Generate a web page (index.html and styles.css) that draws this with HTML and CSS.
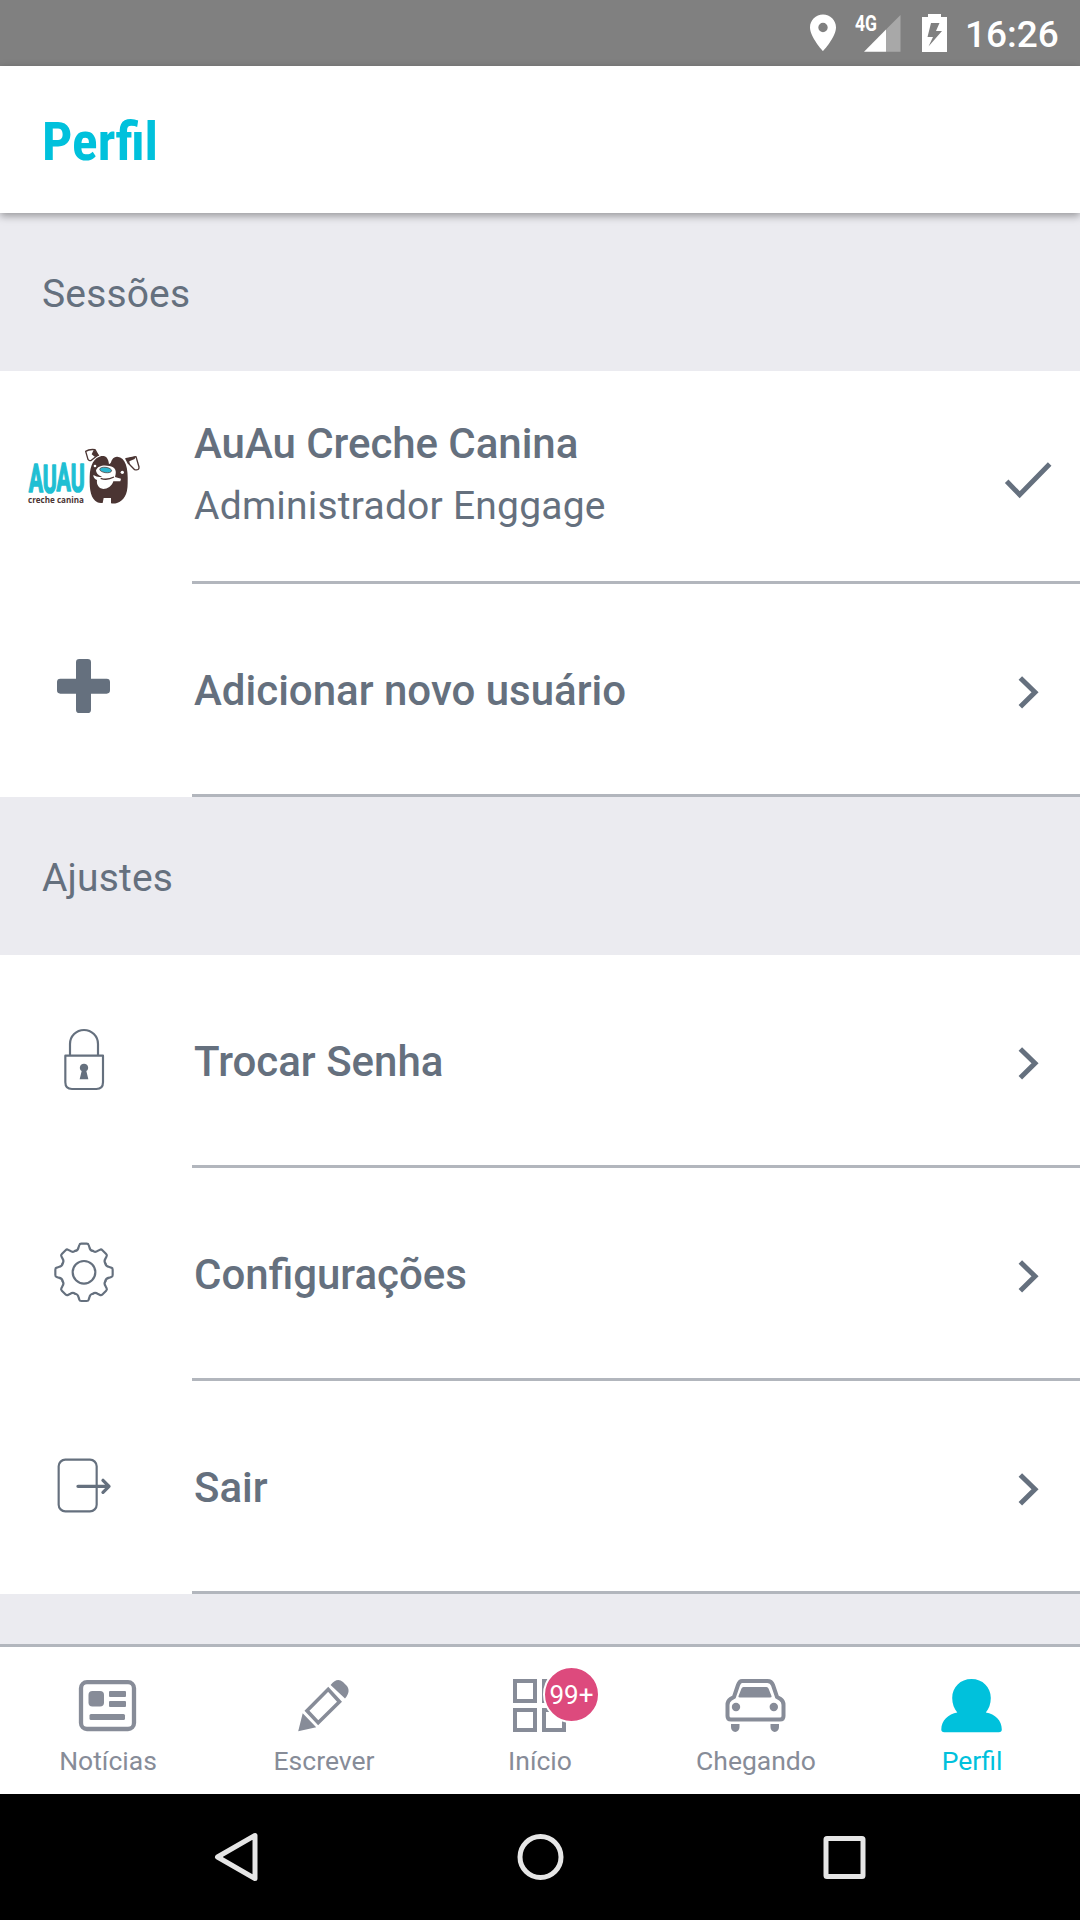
FILE: index.html
```
<!DOCTYPE html>
<html lang="pt-BR">
<head>
<meta charset="utf-8">
<title>Perfil</title>
<link rel="stylesheet" href="styles.css">
</head>
<body>
<div class="status">
  <svg width="117" height="66" viewBox="800 0 117 66">
    <path fill="#fff" fill-rule="evenodd" d="M823 14.500c-7.200 0-13 5.800-13 13 0 9.600 13 23.700 13 23.700s13-14.100 13-23.700c0-7.200-5.800-13-13-13zm0 8.300a4.700 4.700 0 1 1 0 9.400 4.700 4.700 0 0 1 0-9.400z"/>
    <text class="net" x="855" y="31" textLength="22" lengthAdjust="spacingAndGlyphs">4G</text>
    <path fill="#a8a8a8" d="M886 29.500L900.500 15v36.700H886z"/>
    <path fill="#fff" d="M864 51.700L886 29.500v22.200z"/>
  </svg>
  <svg width="40" height="66" viewBox="917 0 40 66">
    <path fill="#fff" fill-rule="evenodd" d="M928 14h13v3h6v35h-25V17h6zM931 23l-3.500 14h5.500l-4.500 9.500L942 31h-6l3.500-8z"/>
  </svg>
  <span class="clock">16:26</span>
</div>
<header class="header"><h1 class="title">Perfil</h1></header>
<main class="main">
  <h2 class="section">Sessões</h2>
  <div class="row">
    <svg class="logo" width="180" height="110" viewBox="0 3 540 330">
      <text class="logo-name" x="56" y="217" dy="0 3 -6 1" textLength="168" lengthAdjust="spacingAndGlyphs">AUAU</text>
      <text class="logo-sub" x="54" y="248" textLength="168" lengthAdjust="spacingAndGlyphs">creche canina</text>
      <path fill="#4b3533" d="M297 133C295 113 287 106 274 108C252 113 240 135 239 170C238 214 243 235 262 247Q267 250 278 249L281 234H303V250Q312 252 321 249C341 242 353 225 353 190C355 142 347 113 322 110Q308 109 302 129z"/>
      <path fill="#fff" d="M258 151C263 137 281 134 298 138C316 141 321 152 315 171L333 176 331 184 310 184C306 199 292 207 280 207C265 205 259 193 261 180Q250 176 250 165Q264 174 276 170Q258 164 258 151z"/>
      <path fill="none" stroke="#4b3533" stroke-width="4" d="M272 175Q291 182 312 171"/>
      <ellipse cx="287" cy="150" rx="18" ry="8" fill="#2bb6cf" stroke="#4b3533" stroke-width="2" transform="rotate(8 287 150)"/>
      <circle cx="255" cy="138" r="4" fill="#fff"/><circle cx="337" cy="157" r="5" fill="#fff"/>
      <path fill="#fff" stroke="#4b3533" stroke-width="4" stroke-linejoin="round" d="M227 94Q237 87 255 89L264 105 245 120Q239 125 234 118z"/>
      <path fill="#4b3533" d="M252 88L268 107 254 110 245 103z"/>
      <path fill="#fff" stroke="#4b3533" stroke-width="4" stroke-linejoin="round" d="M348 116L378 110 387 141Q388 152 374 149L355 130z"/>
      <path fill="#4b3533" d="M346 116L377 109 374 117 358 124 360 134z"/>
    </svg>
    <div class="body">
      <div class="texts"><div class="name">AuAu Creche Canina</div><div class="sub">Administrador Enggage</div></div>
      <svg width="120" height="100" viewBox="0 -12 360 300"><path class="mark" d="M140 154L179 194 269 102"/></svg>
    </div>
  </div>
  <div class="row">
    <svg class="icon" width="110" height="100" viewBox="0 -3 330 300"><path fill="#65707e" d="M148 57h25q10 0 10 10v49h47q10 0 10 10v25q0 10-10 10h-47v48q0 10-10 10h-25q-10 0-10-10v-48H91q-10 0-10-10v-25q0-10 10-10h47V67q0-10 10-10z"/></svg>
    <div class="body">
      <div class="name">Adicionar novo usuário</div>
      <svg width="120" height="100" viewBox="0 627 360 300"><path class="mark chev" d="M181 744L225 787 181 830"/></svg>
    </div>
  </div>
  <h2 class="section">Ajustes</h2>
  <div class="row">
    <svg class="icon" width="110" height="100" viewBox="0 0 330 300">
      <path class="line" d="M120 136v-34a42 42 0 0 1 84 0v34M106 137h113v80q0 20-20 20h-73q-20 0-20-20z"/>
      <path fill="#65707e" d="M162 161a12 12 0 0 1 7 22l6 25h-26l6-25a12 12 0 0 1 7-22z"/>
    </svg>
    <div class="body">
      <div class="name">Trocar Senha</div>
      <svg width="120" height="100" viewBox="0 627 360 300"><path class="mark chev" d="M181 744L225 787 181 830"/></svg>
    </div>
  </div>
  <div class="row">
    <svg class="icon" width="110" height="100" viewBox="0 9 330 300">
      <g transform="translate(162 157)" class="line">
        <circle r="34"/>
        <path id="tooth" d="M-26.600-64.200Q-18-65-16-76L-14-82Q-13-86-8-86H8Q13-86 14-82L16-76Q18-65 26.600-64.200"/>
        <use href="#tooth" transform="rotate(45)"/><use href="#tooth" transform="rotate(90)"/><use href="#tooth" transform="rotate(135)"/><use href="#tooth" transform="rotate(180)"/><use href="#tooth" transform="rotate(225)"/><use href="#tooth" transform="rotate(270)"/><use href="#tooth" transform="rotate(315)"/>
      </g>
    </svg>
    <div class="body">
      <div class="name">Configurações</div>
      <svg width="120" height="100" viewBox="0 627 360 300"><path class="mark chev" d="M181 744L225 787 181 830"/></svg>
    </div>
  </div>
  <div class="row">
    <svg class="icon" width="110" height="100" viewBox="0 648 330 300">
      <rect class="line" x="86" y="719" width="114" height="155" rx="20"/>
      <path class="line arrow" d="M144 799H237M219 781L237 799 219 817"/>
    </svg>
    <div class="body">
      <div class="name">Sair</div>
      <svg width="120" height="100" viewBox="0 627 360 300"><path class="mark chev" d="M181 744L225 787 181 830"/></svg>
    </div>
  </div>
</main>
<nav class="tabs">
  <div class="tab">
    <svg width="70" height="66" viewBox="73 1671 70 66" fill="currentColor">
      <rect x="81" y="1682.200" width="53" height="46.800" rx="6" fill="none" stroke="currentColor" stroke-width="4.300"/>
      <rect x="88.500" y="1691" width="15.500" height="15.500" rx="4"/><rect x="109" y="1691" width="17" height="6" rx="1"/><rect x="109" y="1701" width="17" height="6" rx="1"/><rect x="89.500" y="1714" width="35.500" height="6" rx="1.500"/>
    </svg>
    <span class="label">Notícias</span>
  </div>
  <div class="tab">
    <svg width="70" height="66" viewBox="289 1671 70 66" fill="currentColor">
      <path d="M298.200 1731.200L302.700 1713.300 316.200 1727.300zM330.600 1685C335 1679.500 339 1678.500 343 1682L346.500 1685.500C349.500 1689 349.500 1693.500 345 1698.500z"/>
      <path fill="none" stroke="currentColor" stroke-width="3.600" d="M307 1710.700L328.200 1689.300 339.500 1701.700 318.200 1722.700z"/>
    </svg>
    <span class="label">Escrever</span>
  </div>
  <div class="tab">
    <svg width="70" height="66" viewBox="505 1671 70 66" fill="none" stroke="currentColor" stroke-width="4">
      <path d="M515 1681h20v20h-20zM544 1681h20v20h-20zM515 1710h20v20h-20zM544 1710h20v20h-20z"/>
    </svg>
    <span class="badge">99+</span>
    <span class="label">Início</span>
  </div>
  <div class="tab">
    <svg width="70" height="66" viewBox="721.500 1671 70 66" fill="currentColor">
      <path fill="none" stroke="currentColor" stroke-width="4" d="M743 1681h25q4 0 5.500 4l4 12 3.500 2q3 2 3 6v11q0 3.500-3.500 3.500h-49q-3.500 0-3.500-3.500v-11q0-4 3-6l3.500-2 4-12q1.500-4 4-4z"/>
      <path d="M744 1687h23q1.500 0 2 1.500l3 7.500q.5 1.500-1.500 1.500h-30q-2 0-1.500-1.500l3-7.500q.5-1.500 2-1.500zM731.500 1724h8.500v3a4.200 5 0 0 1-8.500 0zM771 1724h8.500v3a4.200 5 0 0 1-8.500 0z"/>
      <circle cx="736.500" cy="1707" r="4.200"/><circle cx="774.300" cy="1707" r="4.200"/>
    </svg>
    <span class="label">Chegando</span>
  </div>
  <div class="tab active">
    <svg width="70" height="66" viewBox="937 1671 70 66" fill="currentColor">
      <path d="M971.500 1679c11 0 19.300 8 19.300 19 0 6-2 11-5 14.500 9.500 1.500 16 8 16 17q0 2.700-3 2.700h-54.500q-3 0-3-2.700c0-9 7-15.500 16-17-3-3.500-5.100-8.500-5.100-14.500 0-11 8.300-19 19.300-19z"/>
    </svg>
    <span class="label">Perfil</span>
  </div>
</nav>
<footer class="nav">
  <svg width="304" height="126" viewBox="84 1794 304 126"><path d="M255 1835.500V1878.500L217.500 1857z"/></svg>
  <svg width="304" height="126" viewBox="388 1794 304 126"><circle cx="540.500" cy="1857" r="20.500"/></svg>
  <svg width="304" height="126" viewBox="692 1794 304 126"><rect x="826" y="1838.500" width="37" height="38" rx="1"/></svg>
</footer>
</body>
</html>
```
FILE: styles.css
```
* { box-sizing: border-box; }
body {
  margin: 0;
  width: 1080px;
  height: 1920px;
  display: flex;
  flex-direction: column;
  overflow: hidden;
  background: #ebebf0;
  color: #65707e;
  font-family: Roboto, sans-serif;
}
svg { display: block; flex: none; }
.status {
  height: 66px;
  padding-left: 800px;
  display: flex;
  background: #808080;
  color: #fff;
}
.net { font-size: 22px; font-weight: 700; fill: #fff; }
.clock {
  padding-left: 8px;
  font-size: 37px;
  line-height: 69px;
  font-weight: 500;
}
.header {
  height: 147px;
  padding: 10px 42px 0;
  background: #fff;
  box-shadow: 0 3px 8px rgba(0, 0, 0, .36);
  z-index: 1;
}
.title {
  margin: 0;
  color: #00c1dc;
  font-size: 53.500px;
  line-height: 132px;
  font-weight: 700;
  font-stretch: 75%;
}
.main { flex: 1; }
.section {
  margin: 0;
  height: 158px;
  padding: 2px 42px 0;
  font-size: 39px;
  line-height: 158px;
  font-weight: 400;
  letter-spacing: .15px;
}
.row {
  height: 213px;
  display: flex;
  background: #fff;
}
.icon { margin: 55px 52px 0 30px; }
.logo { margin: 50px 2px 0 10px; }
.body {
  flex: 1;
  display: flex;
  justify-content: space-between;
  padding: 0 0 0 2px;
  border-bottom: 3px solid #b2b6bd;
}
.body svg { margin-top: 55px; }
.name {
  font-size: 42px;
  line-height: 213px;
  font-weight: 500;
  white-space: nowrap;
}
.texts .name { line-height: 60px; padding-top: 43px; letter-spacing: -.05px; }
.sub { font-size: 39px; line-height: 65px; letter-spacing: .22px; white-space: nowrap; }
.mark { fill: none; stroke: #65707e; stroke-width: 15; }
.line {
  fill: none;
  stroke: #65707e;
  stroke-width: 6.500;
  stroke-linejoin: round;
  stroke-linecap: round;
}
.arrow { stroke-width: 10; }
.logo-name {
  font-size: 114px;
  font-weight: 700;
  fill: #1fbfd3;
  stroke: #1fbfd3;
  stroke-width: 5;
  stroke-linejoin: round;
}
.logo-sub { font-family: "Open Sans", sans-serif; font-size: 26px; font-weight: 700; fill: #4b3533; }
.tabs {
  box-sizing: content-box;
  height: 147px;
  border-top: 3px solid #b2b6bd;
  display: grid;
  grid-template-columns: repeat(5, 1fr);
  background: #fff;
  color: #878c98;
}
.tab {
  position: relative;
  padding-top: 24px;
  display: flex;
  flex-direction: column;
  align-items: center;
}
.active { color: #00c1dc; }
.label { font-size: 26.500px; line-height: 47px; white-space: nowrap; }
.badge {
  position: absolute;
  left: 111px;
  top: 19px;
  width: 57px;
  height: 57px;
  border: 2px solid #fff;
  border-radius: 50%;
  background: #dd4a7d;
  color: #fff;
  font-size: 26px;
  line-height: 54px;
  text-align: center;
}
.nav {
  height: 126px;
  padding: 0 84px;
  display: flex;
  background: #000;
}
.nav path, .nav circle, .nav rect {
  fill: none;
  stroke: #e6e6e6;
  stroke-width: 5;
  stroke-linejoin: round;
}
```
